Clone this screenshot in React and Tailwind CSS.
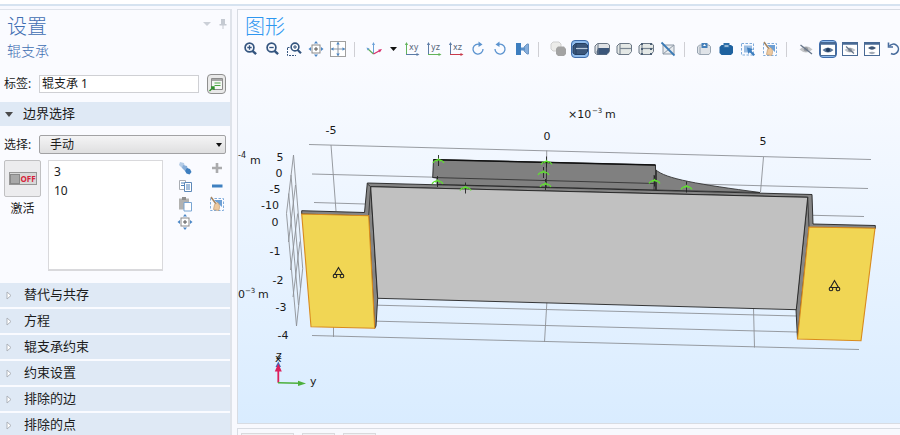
import { useState } from "react";

const sections = ["替代与共存", "方程", "辊支承约束", "约束设置", "排除的边", "排除的点"];

function Icon({ children, className }) {
  return (
    <svg viewBox="0 0 16 16" fill="none" className={className || "size-4"} aria-hidden="true">
      {children}
    </svg>
  );
}

function ToolButton({ label, active, children }) {
  return (
    <button title={label} aria-label={label} className="flex w-[22px] h-5 shrink-0 items-center justify-center">
      <span className={active ? "flex size-[18px] items-center justify-center rounded-sm border border-[#3f6cab] bg-[#8fbbec]" : "flex"}>
        <Icon>{children}</Icon>
      </span>
    </button>
  );
}

function Separator() {
  return (
    <div className="flex w-[14px] shrink-0 justify-start pl-[5px]">
      <div className="w-px h-[15px] bg-[#cfcfd4]"></div>
    </div>
  );
}

const Magnifier = ({ minus }) => (
  <>
    <circle cx="7.500" cy="6.500" r="4.400" stroke="#34557f" strokeWidth="1.700" />
    <path d="M10.500 9.800l3.600 3.400" stroke="#34557f" strokeWidth="2.400" />
    <path d={minus ? "M5.300 6.500h4.400" : "M5.300 6.500h4.400M7.500 4.300v4.400"} stroke="#34557f" strokeWidth="1.300" />
  </>
);

const ExtentsIcon = () => (
  <>
    <rect x="4" y="4" width="8" height="8" stroke="#8a8a8a" fill="#fff" />
    <path d="M8 6v4M6 8h4" stroke="#555" />
    <path d="M8 0l2 2.500H6zM8 16l2-2.500H6zM0.500 8L3 6v4zM15.500 8L13 6v4z" fill="#4a86c5" />
  </>
);

const PlaneIcon = ({ a, b, text }) => (
  <>
    <path d="M2.500 14V3" stroke={a} />
    <path d="M2.500 1l1.600 3H0.900z" fill={a} />
    <path d="M2 13.500h11" stroke={b} />
    <path d="M15.500 13.500l-3 1.600v-3.200z" fill={b} />
    <text x="5" y="9" fontSize="8" fill="#56667c" fontFamily="DejaVu Sans">{text}</text>
  </>
);

const BoxIcon = ({ fill, bottom, mid, line = "#6b7785" }) => (
  <>
    <path d="M1 5l2.500-2.500h10L15.500 4v6.500L13 13.500H3L1 12z" fill={fill} stroke={line} />
    {bottom && <path d="M4 7h11v4l-2.500 2.500H3.500L2.500 11z" fill={bottom} />}
    <path d="M4 3v10" stroke={line} />
    {mid && <path d="M4 7.500h11.500" stroke={mid} strokeWidth="1.200" />}
  </>
);

const BroomIcon = () => (
  <>
    <rect x="1.500" y="2.500" width="13" height="12" stroke="#7fabdb" strokeDasharray="2.500 1.500" />
    <path d="M5 4h8v7z" fill="#6c9fd5" />
    <path d="M2 1l5 7" stroke="#a48562" strokeWidth="1.500" />
    <path d="M5.500 8.500L8.500 6.500C11 8.500 11 12 9.500 14.500L4.500 13.500z" fill="#edc9a0" stroke="#c09a70" strokeWidth="0.700" />
  </>
);

const WindowEye = ({ off, double }) => (
  <>
    <rect x="0.500" y="1.500" width="15" height="13" fill="#fff" stroke="#496a95" />
    <path d="M0 2.500h16" stroke="#496a95" strokeWidth="2.500" />
    {double ? (
      <>
        <path d="M4 7Q8 3.500 12 7Q8 10.500 4 7z" fill="#3c5474" />
        <path d="M4.500 11.800Q8 9.500 11.500 11.800Q8 14.500 4.500 11.800z" fill="#a3abb5" />
      </>
    ) : (
      <>
        <path d="M2.500 9Q8 4 13.500 9Q8 14 2.500 9z" fill={off ? "#c0c4ca" : "#5a7597"} />
        <circle cx="8" cy="8.900" r="2" fill={off ? "#8b929b" : "#213c5e"} />
      </>
    )}
    {off && <path d="M4 5.500l8 7" stroke="#66758a" strokeWidth="1.200" />}
  </>
);

function Toolbar() {
  return (
    <div className="flex items-center h-5 pl-px overflow-hidden">
      <ToolButton label="放大"><Magnifier /></ToolButton>
      <ToolButton label="缩小"><Magnifier minus /></ToolButton>
      <ToolButton label="缩放框">
        <path d="M1.500 7v7.500H10" stroke="#34557f" strokeDasharray="2 1" />
        <path d="M1.500 6.500h3" stroke="#34557f" strokeDasharray="2 1" />
        <circle cx="9" cy="6" r="3.900" fill="#fff" stroke="#34557f" strokeWidth="1.600" />
        <path d="M11.500 8.800l3.500 3.500" stroke="#34557f" strokeWidth="2.200" />
        <path d="M7 6h4M9 4v4" stroke="#34557f" />
      </ToolButton>
      <ToolButton label="缩放到选择"><ExtentsIcon /></ToolButton>
      <ToolButton label="缩放到窗口大小">
        <rect x="0.500" y="0.500" width="15" height="15" fill="#fff" stroke="#a0a0a0" />
        <path d="M8 1v14M1 8h14" stroke="#8a96a5" />
        <path d="M8 1l1.800 2.500H6.200zM8 15l1.800-2.500H6.200zM1 8l2.500-1.800v3.600zM15 8l-2.500-1.800v3.600z" fill="#4a86c5" />
      </ToolButton>
      <Separator />
      <ToolButton label="默认视图">
        <path d="M7.500 13V3" stroke="#6aa0d8" />
        <path d="M7.500 13L2 8" stroke="#5fae57" strokeWidth="1.200" />
        <path d="M7.500 13L14 9.500" stroke="#d92f6c" strokeWidth="1.300" />
        <path d="M7.500 1l1.500 3H6zM0.500 6.500l3 1-2 2z" fill="#6aa0d8" />
        <path d="M16 8l-2.200 3.400-1.600-2.600z" fill="#d92f6c" />
      </ToolButton>
      <button aria-label="视图菜单" className="flex w-4 h-5 shrink-0 items-center justify-center">
        <svg viewBox="0 0 7 4" className="w-[7px] h-1"><path d="M0 0h7L3.500 4z" fill="#111" /></svg>
      </button>
      <ToolButton label="xy 视图"><PlaneIcon a="#63b35a" b="#5b7ba6" text="xy" /></ToolButton>
      <ToolButton label="yz 视图"><PlaneIcon a="#5b7ba6" b="#63b35a" text="yz" /></ToolButton>
      <ToolButton label="xz 视图"><PlaneIcon a="#5b7ba6" b="#c93a4b" text="xz" /></ToolButton>
      <ToolButton label="顺时针旋转">
        <path d="M10 3.500A5 5 0 1 0 13 8" stroke="#5b93cf" strokeWidth="1.300" />
        <path d="M8.500 0.500L12.500 3.500 8.500 6z" fill="#5b93cf" />
      </ToolButton>
      <ToolButton label="逆时针旋转">
        <path d="M6 3.500A5 5 0 1 1 3 8" stroke="#5b93cf" strokeWidth="1.300" />
        <path d="M7.500 0.500L3.500 3.500l4 2.500z" fill="#5b93cf" />
      </ToolButton>
      <ToolButton label="正交投影">
        <path d="M2 2h5v12H2z" fill="#3d7ebf" />
        <path d="M10 6l3-3h1.500v10H13l-3-3z" fill="#86aedb" stroke="#6f97c4" />
        <path d="M7 6.500h4v3H7z" fill="#5c90c9" />
      </ToolButton>
      <Separator />
      <ToolButton label="透明">
        <path d="M1 3l2-2h6l2 2v6l-2 1H3L1 8z" fill="#ececea" stroke="#cfcfcf" />
        <path d="M6 7.500L8 5.500h6L16 8v5l-2 2H8l-2-2z" fill="#a3a3a3" />
      </ToolButton>
      <ToolButton label="场景光" active><BoxIcon fill="#3b567a" mid="#b8c9dc" line="#243f63" /></ToolButton>
      <ToolButton label="环境"><BoxIcon fill="#e0e3e6" bottom="#3b567a" /></ToolButton>
      <ToolButton label="线框"><BoxIcon fill="#e4e8e6" mid="#7a8692" /></ToolButton>
      <ToolButton label="网格">
        <BoxIcon fill="#e4e8e6" mid="#7a8692" />
        <path d="M3 2h2v2H3zM12 2h2v2h-2zM3 7h2v2H3zM12 7h2v2h-2zM3 12h2v2H3zM12 12h2v2h-2z" fill="#4c5f75" />
      </ToolButton>
      <ToolButton label="隐藏网格">
        <path d="M3 4h11v9H3zM3 13l11-9" fill="#e8ebee" stroke="#8c98a6" />
        <path d="M1.500 1.500l13 13" stroke="#3b7ab5" strokeWidth="1.800" />
      </ToolButton>
      <Separator />
      <ToolButton label="复制图像">
        <path d="M1.500 6l2-2h9.500l1.500 1.500v6L13 13.500H3.500L1.500 12z" fill="#dfe3e8" stroke="#98a4b1" />
        <path d="M4 5.500v8" stroke="#98a4b1" />
        <path d="M5.500 2h6v5h-6z" fill="#4580ba" /><path d="M7 5l1.500-2L10 5z" fill="#fff" />
      </ToolButton>
      <ToolButton label="打印">
        <path d="M1.500 6l2-2H13l2 1.500v6.500l-2 2H3.500l-2-2z" fill="#1f629f" />
        <path d="M5.500 2h6v5h-6z" fill="#2d6fa9" /><path d="M6.500 5h4" stroke="#fff" />
      </ToolButton>
      <ToolButton label="选择框">
        <rect x="1.500" y="2.500" width="12" height="11.500" stroke="#7fabdb" strokeDasharray="2.500 1.500" />
        <path d="M4 4.500h8v7H4z" fill="#9bbde2" />
        <path d="M7 6.500l6 1.500-1.800 1.700 3.800 3.800-1.500 1.500-3.800-3.800L8.200 13z" fill="#3d7ebf" />
      </ToolButton>
      <ToolButton label="清除选择"><BroomIcon /></ToolButton>
      <Separator />
      <ToolButton label="隐藏">
        <path d="M1.500 8.500Q8 2 14.500 8.500Q8 14.500 1.500 8.500z" fill="#c3c5c8" />
        <circle cx="8" cy="8.300" r="2.200" fill="#96999d" />
        <path d="M2.500 4l11.500 9" stroke="#66758a" strokeWidth="1.300" />
      </ToolButton>
      <ToolButton label="显示" active><WindowEye /></ToolButton>
      <ToolButton label="隐藏对象"><WindowEye off /></ToolButton>
      <ToolButton label="切换可见"><WindowEye double /></ToolButton>
      <ToolButton label="重置隐藏">
        <path d="M3.500 5A5 5 0 1 1 5 12.500" stroke="#486c9d" strokeWidth="1.600" />
        <path d="M2.500 1.500v4.500H7" stroke="#486c9d" strokeWidth="1.600" />
      </ToolButton>
    </div>
  );
}

const markers = [
  [438.5, 161], [546.5, 162.5], [543.5, 173], [437.5, 182],
  [465.5, 188.5], [545.5, 185], [654.5, 181.5], [686.5, 187.5],
];

const ticks = [
  [331, 134, "-5"], [547, 140, "0"], [763, 145, "5"],
  [280, 161, "5"], [279, 177, "0"], [275, 193, "-5"], [270, 209, "-10"],
  [275, 226, "0"], [275, 255, "-1"], [278, 284, "-2"], [281, 311, "-3"], [283, 339, "-4"],
];

function Roller({ x, y }) {
  return (
    <g transform={`translate(${x} ${y})`} stroke="#222" strokeWidth="1.100" fill="none">
      <path d="M0-5.500L-4 1.500H4z" />
      <circle cx="-3.500" cy="3" r="1.800" />
      <circle cx="3.500" cy="3" r="1.800" />
    </g>
  );
}

function Plot() {
  return (
    <svg viewBox="238 62 662 361" className="w-full h-full" fontFamily="DejaVu Sans, sans-serif" fontSize="11" fill="#1a1a1a">
      {/* grid behind the part */}
      <g stroke="#8d9196" strokeWidth="0.900" fill="none">
        <path d="M309 144.500L871 159.500M312 174L868 188.500M314 202.500L365 204M813 215.300L864 216.500" />
        <path d="M331 145L336 211M546.700 150.500V170M763.500 157L760.500 192" />
        <path d="M370 305L797 316M370 321L797 332M312 335.500L859 349.500" />
        <path d="M333.500 326V337M547 300L544.500 342M753.500 308L754.500 347.500" />
        <path d="M293.500 155L286.500 213.500M295.500 185L288.500 242M297.700 213.500L290.500 270M300 241.500L293 297M302.700 268.500L296.500 326" />
        <path d="M293.500 155L302.700 268.500M291 175L300.500 288M288.700 193.500L298.500 305M286.500 213.500L296.500 326" />
      </g>

      {/* raised block and fillet */}
      <path d="M433.500 159.500L655.500 165V190L437 184.500V178L432.700 177.500z" fill="#808080" stroke="#222" strokeWidth="0.900" />
      <path d="M655.500 169.500C665 179 700 184.500 760 192.500L655.500 190z" fill="#808080" stroke="#333" strokeWidth="0.900" />
      <path d="M433.500 159.700L655.500 165" stroke="#111" strokeWidth="1.600" />
      <path d="M432.700 177.500L654.500 183.500M437.500 178v6.500M654 175v15M656.500 170v20M546.500 164v24" stroke="#333" strokeWidth="0.900" fill="none" />

      {/* plate */}
      <path d="M301.700 210.700L364.500 212.500 367.300 183 812 194.500 813 224 875.300 225.500V228.500L809 227.500 797.500 339 796 309.700 807.700 197.300 370.700 186.700 377.700 298.300 376 326 374.700 328.300 368.700 216 301.700 214z" fill="#858585" stroke="#222" strokeWidth="0.900" />
      <path d="M370.700 186.700L807.700 197.300 796.300 309.700 377.700 298.300z" fill="#c1c1c1" stroke="#222" strokeWidth="0.900" />
      <path d="M370.700 186.700L368.700 215.500M807.700 197.300L809 227M367.500 184L370.700 186.700" stroke="#333" strokeWidth="0.900" fill="none" />

      {/* selected boundaries */}
      <g fill="#f1d654" stroke="#d98a1c" strokeWidth="1.100">
        <path d="M301.700 214L368.700 215.700 374.700 328.300 311 326.700z" />
        <path d="M809 227L875 228.300 861 340.700 797.500 339z" />
      </g>
      <Roller x={338.5} y={273} />
      <Roller x={834.5} y={286} />

      {markers.map(([x, y]) => (
        <g key={x + "-" + y} transform={`translate(${x} ${y})`} fill="none">
          <path d="M0-6V5" stroke="#222" strokeWidth="0.900" strokeDasharray="5 1" />
          <path d="M-5.500 2Q-4-1 0-1.200Q4-1 5.500 2M-2 0.500L0-2 2 0.500" stroke="#5fe02f" strokeWidth="1.100" />
        </g>
      ))}

      <g textAnchor="middle">
        {ticks.map(([x, y, t]) => <text key={x + "-" + y} x={x} y={y}>{t}</text>)}
      </g>
      <text x="568" y="118">×10</text>
      <text x="592" y="113" fontSize="7">−3</text>
      <text x="605" y="118">m</text>
      <text x="238" y="158" fontSize="8">-4</text>
      <text x="250" y="164">m</text>
      <text x="238" y="298">0</text>
      <text x="245" y="293" fontSize="7">−3</text>
      <text x="258" y="298">m</text>

      {/* axis triad */}
      <path d="M278.300 382.700V370" stroke="#dc1f5c" strokeWidth="1.800" />
      <path d="M278.300 361.500L281 367H275.500z" fill="#3c6cb8" />
      <path d="M278.300 363.500L281.800 371.500H274.800z" fill="#dc1f5c" />
      <path d="M278 382.700L299 383.300" stroke="#4caf3c" strokeWidth="1.500" />
      <path d="M306 383.400L298 386V380.700z" fill="#4caf3c" />
      <text x="276" y="359">z</text>
      <text x="275" y="362">x</text>
      <text x="310" y="385">y</text>
    </svg>
  );
}

function SelectionTools() {
  return (
    <div className="grid grid-cols-2 gap-x-4 gap-y-0.5 content-start">
      <button aria-label="创建选择">
        <Icon>
          <path d="M3 2l4 1 1 4-3 1-3-3z" fill="#b5cce6" />
          <path d="M6 5l4 1 1 4-3 1-3-3z" fill="#86add8" />
          <path d="M10 8l3 1 1.500 3-2 2.500-3-1L8 11z" fill="#3d7ebf" />
        </Icon>
      </button>
      <button aria-label="添加"><Icon><path d="M8 3v10M3 8h10" stroke="#ababad" strokeWidth="2.600" /></Icon></button>
      <button aria-label="复制选择">
        <Icon>
          <path d="M2.500 2.500h6v9h-6z" fill="#fff" stroke="#a9adb3" />
          <path d="M7.500 4.500h7v9h-7z" fill="#fff" stroke="#5d88b8" />
          <path d="M4 5h3M4 7.500h3M9 7h4M9 9h4M9 11h4" stroke="#4b7fb6" />
        </Icon>
      </button>
      <button aria-label="移除"><Icon><path d="M3 8h10.500" stroke="#3f80c0" strokeWidth="3" /></Icon></button>
      <button aria-label="粘贴选择">
        <Icon>
          <path d="M2 2.500h10v11H2z" fill="#b2b2b0" />
          <path d="M5 1h4v3H5z" fill="#8f8f8f" />
          <path d="M7 6.500h7.500v8.500H7z" fill="#fff" stroke="#79a5d3" />
        </Icon>
      </button>
      <button aria-label="清除选择"><Icon><BroomIcon /></Icon></button>
      <button aria-label="缩放到选择"><Icon><ExtentsIcon /></Icon></button>
    </div>
  );
}

function Settings() {
  const [label, setLabel] = useState("辊支承 1");

  return (
    <aside className="w-[232px] shrink-0 flex flex-col overflow-hidden border-t border-r-2 border-[#dfe3ea] bg-[#fafbff]">
      <header className="flex items-start justify-between pl-[7px] pr-[3px] pt-[5px] h-[60px] shrink-0 font-light text-[#3f6eb2]">
        <div>
          <h1 className="text-[20px] leading-6">设置</h1>
          <h2 className="text-[14px] leading-6">辊支承</h2>
        </div>
        <div className="flex items-center gap-2 pt-1">
          <button aria-label="面板菜单"><svg viewBox="0 0 8 4" className="w-2 h-1"><path d="M0 0h8L4 4z" fill="#cbd0d8" /></svg></button>
          <button aria-label="固定"><svg viewBox="0 0 8 10" className="w-2 h-[10px]"><path d="M2 0h4v5h1.500v1.500h-3V10h-1V6.500h-3V5H2z" fill="#c5cad2" /></svg></button>
        </div>
      </header>

      <div className="flex items-center h-7 shrink-0 pl-1 pr-1 text-[12px]">
        <label htmlFor="label" className="w-[35px] shrink-0">标签:</label>
        <input id="label" value={label} onChange={(e) => setLabel(e.target.value)} className="min-w-0 flex-1 h-[18px] px-0.5 border border-[#cfd0d4] bg-white outline-none" />
        <button aria-label="编辑标签" className="ml-2 flex w-[19px] h-5 shrink-0 items-center justify-center rounded-sm border border-[#8f8f8f] bg-[#e9e9e9]">
          <Icon>
            <path d="M2.500 2.500h11v11h-11z" fill="#f5f7f5" stroke="#8c8c8c" />
            <path d="M2 4h12" stroke="#8c8c8c" strokeWidth="1.500" />
            <path d="M5.500 7h6M5.500 9.500h6" stroke="#4ca644" />
            <path d="M0.500 15l4-4M2 11h3v3" stroke="#2f8f2a" strokeWidth="1.400" />
          </Icon>
        </button>
      </div>

      <button className="mt-1 flex h-6 shrink-0 items-center gap-[10px] pl-[5px] text-[13px] bg-[#dfe9f5]">
        <svg viewBox="0 0 8 5" className="w-2 h-[5px]"><path d="M0 0h8L4 5z" fill="#4a4a4a" /></svg>
        边界选择
      </button>

      <div className="flex flex-col h-[157px] shrink-0 pt-[9px] px-1 text-[12px]">
        <div className="flex items-center">
          <label htmlFor="mode" className="w-[35px] shrink-0">选择:</label>
          <div className="relative flex-1">
            <select id="mode" className="block w-full h-[19px] appearance-none pl-[10px] rounded-xs border border-[#a2a2a4] bg-linear-to-b from-[#f4f4f5] to-[#dfdfe0] outline-none">
              <option>手动</option>
              <option>所有边界</option>
            </select>
            <svg viewBox="0 0 6 4" className="pointer-events-none absolute right-1 top-2 w-1.5 h-1"><path d="M0 0h6L3 4z" fill="#111" /></svg>
          </div>
        </div>
        <div className="mt-[6px] flex">
          <div className="flex flex-col items-center gap-1">
            <button aria-label="激活选择" className="flex size-[37px] items-center justify-center rounded-xs border border-[#c0c0c2] bg-[#ececee]">
              <span className="flex items-center h-[13px] w-7 gap-px border border-[#969696] bg-[#d8d8d8] text-[8px] font-bold text-[#d6223a]">
                <span className="size-[10px] shrink-0 border border-[#888] bg-[#a8a8a8]"></span>OFF
              </span>
            </button>
            <span className="leading-4">激活</span>
          </div>
          <ul role="listbox" aria-label="边界" className="ml-[7px] w-[115px] h-[111px] border border-b-2 border-[#d9d9dc] bg-white pt-px pl-[5px] leading-[19px]">
            <li role="option" aria-selected="false">3</li>
            <li role="option" aria-selected="false">10</li>
          </ul>
          <div className="ml-[14px]"><SelectionTools /></div>
        </div>
      </div>

      <div className="flex flex-col gap-0.5 shrink-0">
        {sections.map((name) => (
          <button key={name} className="flex h-6 shrink-0 items-center gap-3 pl-[6px] text-[13px] bg-[#dfe9f5]">
            <svg viewBox="0 0 6 9" className="w-1.5 h-[9px]"><path d="M1 1l4 3.500L1 8z" fill="#fff" stroke="#a8adb4" strokeWidth="0.900" /></svg>
            {name}
          </button>
        ))}
      </div>
    </aside>
  );
}

function App() {
  return (
    <div className="flex flex-col h-screen overflow-hidden bg-[#f8f9fe] text-[#1c1c1c] font-['Noto_Sans','Noto_Sans_CJK_SC',sans-serif]">
      <div className="h-[6px] shrink-0 border-b-2 border-[#d6e3f0] bg-white"></div>
      <div className="flex flex-1 min-h-0 pt-[3px] gap-[5px]">
        <Settings />
        <main className="flex flex-1 min-w-0 flex-col">
          <section className="flex flex-1 min-h-0 flex-col border-t border-l border-b border-[#d8dce3] bg-[#fafbff]">
            <h1 className="pl-[7px] pt-[5px] text-[20px] leading-6 font-light text-[#2e97f0]">图形</h1>
            <Toolbar />
            <div className="flex-1 min-h-0 mt-[3px] bg-linear-to-b from-[#fafbff] to-[#d9ecff]">
              <Plot />
            </div>
          </section>
          <div className="mt-1 flex h-[7px] shrink-0 gap-2 border-t border-l border-[#d8dce3] pt-1 pl-[3px]">
            <div className="w-[53px] border border-b-0 border-[#d9dadd] bg-[#f0f1f4]"></div>
            <div className="w-[33px] border border-b-0 border-[#d9dadd] bg-[#f0f1f4]"></div>
            <div className="w-[33px] border border-b-0 border-[#d9dadd] bg-[#f0f1f4]"></div>
          </div>
        </main>
      </div>
    </div>
  );
}

export default App;
